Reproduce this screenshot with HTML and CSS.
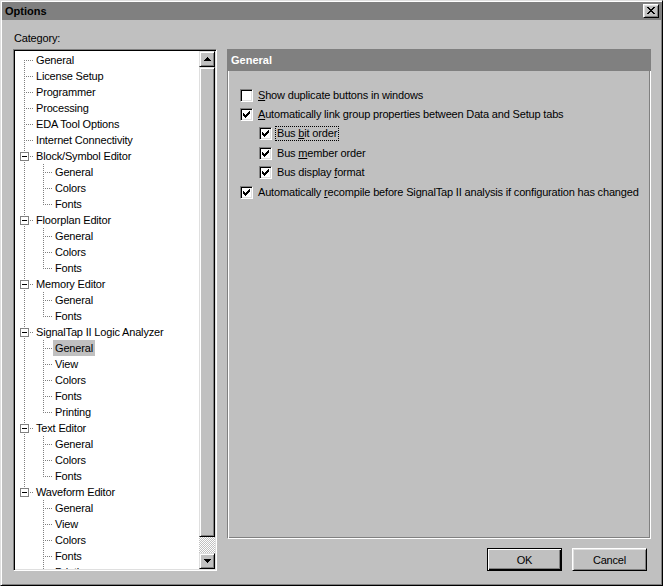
FILE: index.html
```html
<!DOCTYPE html>
<html>
<head>
<meta charset="utf-8">
<title>Options</title>
<link rel="stylesheet" href="styles.css">
</head>
<body>
<div class="window">
  <div class="titlebar">
    <span class="title">Options</span>
    <button class="close" type="button" aria-label="Close">
      <svg class="close-x" width="12" height="10" viewBox="0 0 12 10" shape-rendering="crispEdges">
        <g fill="#000">
          <rect x="2" y="1" width="2" height="1"/><rect x="8" y="1" width="2" height="1"/>
          <rect x="3" y="2" width="2" height="1"/><rect x="7" y="2" width="2" height="1"/>
          <rect x="4" y="3" width="4" height="1"/>
          <rect x="5" y="4" width="2" height="1"/>
          <rect x="4" y="5" width="4" height="1"/>
          <rect x="3" y="6" width="2" height="1"/><rect x="7" y="6" width="2" height="1"/>
          <rect x="2" y="7" width="2" height="1"/><rect x="8" y="7" width="2" height="1"/>
        </g>
      </svg>
    </button>
  </div>

  <div class="body">
    <div class="left">
      <div class="cat-label">Category:</div>
      <div class="tree">
        <div class="tree-list">
          <div class="row"><span class="cell first"></span><span class="lbl">General</span></div>
          <div class="row"><span class="cell tee"></span><span class="lbl">License Setup</span></div>
          <div class="row"><span class="cell tee"></span><span class="lbl">Programmer</span></div>
          <div class="row"><span class="cell tee"></span><span class="lbl">Processing</span></div>
          <div class="row"><span class="cell tee"></span><span class="lbl">EDA Tool Options</span></div>
          <div class="row"><span class="cell tee"></span><span class="lbl">Internet Connectivity</span></div>

          <div class="row"><span class="cell tee"><span class="toggle"><span class="minus"></span></span></span><span class="lbl">Block/Symbol Editor</span></div>
          <div class="row"><span class="cell pipe"></span><span class="cell tee"></span><span class="lbl">General</span></div>
          <div class="row"><span class="cell pipe"></span><span class="cell tee"></span><span class="lbl">Colors</span></div>
          <div class="row"><span class="cell pipe"></span><span class="cell end"></span><span class="lbl">Fonts</span></div>

          <div class="row"><span class="cell tee"><span class="toggle"><span class="minus"></span></span></span><span class="lbl">Floorplan Editor</span></div>
          <div class="row"><span class="cell pipe"></span><span class="cell tee"></span><span class="lbl">General</span></div>
          <div class="row"><span class="cell pipe"></span><span class="cell tee"></span><span class="lbl">Colors</span></div>
          <div class="row"><span class="cell pipe"></span><span class="cell end"></span><span class="lbl">Fonts</span></div>

          <div class="row"><span class="cell tee"><span class="toggle"><span class="minus"></span></span></span><span class="lbl">Memory Editor</span></div>
          <div class="row"><span class="cell pipe"></span><span class="cell tee"></span><span class="lbl">General</span></div>
          <div class="row"><span class="cell pipe"></span><span class="cell end"></span><span class="lbl">Fonts</span></div>

          <div class="row"><span class="cell tee"><span class="toggle"><span class="minus"></span></span></span><span class="lbl">SignalTap II Logic Analyzer</span></div>
          <div class="row"><span class="cell pipe"></span><span class="cell tee"></span><span class="lbl sel">General</span></div>
          <div class="row"><span class="cell pipe"></span><span class="cell tee"></span><span class="lbl">View</span></div>
          <div class="row"><span class="cell pipe"></span><span class="cell tee"></span><span class="lbl">Colors</span></div>
          <div class="row"><span class="cell pipe"></span><span class="cell tee"></span><span class="lbl">Fonts</span></div>
          <div class="row"><span class="cell pipe"></span><span class="cell end"></span><span class="lbl">Printing</span></div>

          <div class="row"><span class="cell tee"><span class="toggle"><span class="minus"></span></span></span><span class="lbl">Text Editor</span></div>
          <div class="row"><span class="cell pipe"></span><span class="cell tee"></span><span class="lbl">General</span></div>
          <div class="row"><span class="cell pipe"></span><span class="cell tee"></span><span class="lbl">Colors</span></div>
          <div class="row"><span class="cell pipe"></span><span class="cell end"></span><span class="lbl">Fonts</span></div>

          <div class="row"><span class="cell end"><span class="toggle"><span class="minus"></span></span></span><span class="lbl">Waveform Editor</span></div>
          <div class="row"><span class="cell"></span><span class="cell tee"></span><span class="lbl">General</span></div>
          <div class="row"><span class="cell"></span><span class="cell tee"></span><span class="lbl">View</span></div>
          <div class="row"><span class="cell"></span><span class="cell tee"></span><span class="lbl">Colors</span></div>
          <div class="row"><span class="cell"></span><span class="cell tee"></span><span class="lbl">Fonts</span></div>
          <div class="row"><span class="cell"></span><span class="cell end"></span><span class="lbl">Printing</span></div>
        </div>
        <div class="vscroll">
          <div class="sbtn">
            <svg width="12" height="12" viewBox="0 0 12 12" shape-rendering="crispEdges">
              <g fill="#000">
                <rect x="6" y="4" width="1" height="1"/>
                <rect x="5" y="5" width="3" height="1"/>
                <rect x="4" y="6" width="5" height="1"/>
                <rect x="3" y="7" width="7" height="1"/>
              </g>
            </svg>
          </div>
          <div class="thumb"></div>
          <div class="track"></div>
          <div class="sbtn">
            <svg width="12" height="12" viewBox="0 0 12 12" shape-rendering="crispEdges">
              <g fill="#000">
                <rect x="3" y="4" width="7" height="1"/>
                <rect x="4" y="5" width="5" height="1"/>
                <rect x="5" y="6" width="3" height="1"/>
                <rect x="6" y="7" width="1" height="1"/>
              </g>
            </svg>
          </div>
        </div>
      </div>
    </div>

    <div class="right">
      <div class="panel">
        <div class="panel-head">General</div>
        <div class="opts">
          <div class="opt">
            <span class="cb"></span>
            <span class="opt-lbl"><u>S</u>how duplicate buttons in windows</span>
          </div>
          <div class="opt">
            <span class="cb"><svg class="tick" width="9" height="9" viewBox="0 0 9 9" shape-rendering="crispEdges"><g fill="#000"><rect x="1" y="3" width="1" height="3"/><rect x="2" y="4" width="1" height="3"/><rect x="3" y="5" width="1" height="3"/><rect x="4" y="4" width="1" height="3"/><rect x="5" y="3" width="1" height="3"/><rect x="6" y="2" width="1" height="3"/><rect x="7" y="1" width="1" height="3"/></g></svg></span>
            <span class="opt-lbl"><u>A</u>utomatically link group properties between Data and Setup tabs</span>
          </div>
          <div class="opt sub">
            <span class="cb"><svg class="tick" width="9" height="9" viewBox="0 0 9 9" shape-rendering="crispEdges"><g fill="#000"><rect x="1" y="3" width="1" height="3"/><rect x="2" y="4" width="1" height="3"/><rect x="3" y="5" width="1" height="3"/><rect x="4" y="4" width="1" height="3"/><rect x="5" y="3" width="1" height="3"/><rect x="6" y="2" width="1" height="3"/><rect x="7" y="1" width="1" height="3"/></g></svg></span>
            <span class="opt-lbl focus">Bus <u>b</u>it order</span>
          </div>
          <div class="opt sub gap">
            <span class="cb"><svg class="tick" width="9" height="9" viewBox="0 0 9 9" shape-rendering="crispEdges"><g fill="#000"><rect x="1" y="3" width="1" height="3"/><rect x="2" y="4" width="1" height="3"/><rect x="3" y="5" width="1" height="3"/><rect x="4" y="4" width="1" height="3"/><rect x="5" y="3" width="1" height="3"/><rect x="6" y="2" width="1" height="3"/><rect x="7" y="1" width="1" height="3"/></g></svg></span>
            <span class="opt-lbl">Bus <u>m</u>ember order</span>
          </div>
          <div class="opt sub">
            <span class="cb"><svg class="tick" width="9" height="9" viewBox="0 0 9 9" shape-rendering="crispEdges"><g fill="#000"><rect x="1" y="3" width="1" height="3"/><rect x="2" y="4" width="1" height="3"/><rect x="3" y="5" width="1" height="3"/><rect x="4" y="4" width="1" height="3"/><rect x="5" y="3" width="1" height="3"/><rect x="6" y="2" width="1" height="3"/><rect x="7" y="1" width="1" height="3"/></g></svg></span>
            <span class="opt-lbl">Bus display <u>f</u>ormat</span>
          </div>
          <div class="opt gap">
            <span class="cb"><svg class="tick" width="9" height="9" viewBox="0 0 9 9" shape-rendering="crispEdges"><g fill="#000"><rect x="1" y="3" width="1" height="3"/><rect x="2" y="4" width="1" height="3"/><rect x="3" y="5" width="1" height="3"/><rect x="4" y="4" width="1" height="3"/><rect x="5" y="3" width="1" height="3"/><rect x="6" y="2" width="1" height="3"/><rect x="7" y="1" width="1" height="3"/></g></svg></span>
            <span class="opt-lbl">Automatically <u>r</u>ecompile before SignalTap II analysis if configuration has changed</span>
          </div>
        </div>
      </div>
      <div class="buttons">
        <button class="btn default" type="button">OK</button>
        <button class="btn" type="button">Cancel</button>
      </div>
    </div>
  </div>
</div>
</body>
</html>
```

FILE: styles.css
```css
html, body {
  margin: 0;
  padding: 0;
  background: #c0c0c0;
}

body {
  font-family: "Liberation Sans", Arial, sans-serif;
  font-size: 11px;
  letter-spacing: -0.17px;
  color: #000;
}

.window {
  box-sizing: border-box;
  width: 663px;
  height: 586px;
  background: #c0c0c0;
  border: 1px solid;
  border-color: #dfdfdf #000 #000 #dfdfdf;
  box-shadow: inset 1px 1px 0 #fff, inset -1px -1px 0 #808080;
  padding: 1px;
}

/* ---------- title bar ---------- */
.titlebar {
  height: 18px;
  background: #808080;
  display: flex;
  align-items: center;
  padding-left: 3px;
}

.title {
  font-weight: bold;
  color: #000;
  letter-spacing: 0;
  line-height: 18px;
}

.close {
  margin-left: auto;
  margin-right: 2px;
  box-sizing: border-box;
  width: 16px;
  height: 14px;
  padding: 1px;
  border: 1px solid;
  border-color: #fff #000 #000 #fff;
  box-shadow: inset 1px 1px 0 #dfdfdf, inset -1px -1px 0 #808080;
  background: #c0c0c0;
  display: flex;
}

.close-x {
  display: block;
}

/* ---------- layout ---------- */
.body {
  display: flex;
  padding-left: 11px;
  gap: 10px;
}

.left {
  width: 204px;
  flex: none;
}

.cat-label {
  box-sizing: border-box;
  height: 29px;
  padding: 12px 0 0 1px;
  line-height: 13px;
}

/* ---------- tree ---------- */
.tree {
  box-sizing: border-box;
  width: 204px;
  height: 522px;
  border: 1px solid;
  border-color: #808080 #fff #fff #808080;
  box-shadow: inset 1px 1px 0 #000, inset -1px -1px 0 #dfdfdf;
  padding: 1px;
  background: #fff;
  display: flex;
}

.tree-list {
  flex: 1;
  overflow: hidden;
  padding-top: 1px;
}

.row {
  display: flex;
  height: 16px;
  white-space: nowrap;
}

.cell {
  flex: none;
  width: 19px;
  height: 16px;
  background-repeat: no-repeat;
}

.pipe {
  background-image: repeating-linear-gradient(to bottom, #808080 0 1px, transparent 1px 2px);
  background-size: 1px 16px;
  background-position: 9px 0;
}

.tee {
  background-image:
    repeating-linear-gradient(to bottom, #808080 0 1px, transparent 1px 2px),
    repeating-linear-gradient(to right, #808080 0 1px, transparent 1px 2px);
  background-size: 1px 16px, 8px 1px;
  background-position: 9px 0, 11px 8px;
}

.end {
  background-image:
    repeating-linear-gradient(to bottom, #808080 0 1px, transparent 1px 2px),
    repeating-linear-gradient(to right, #808080 0 1px, transparent 1px 2px);
  background-size: 1px 9px, 8px 1px;
  background-position: 9px 0, 11px 8px;
}

.first {
  background-image:
    repeating-linear-gradient(to bottom, #808080 0 1px, transparent 1px 2px),
    repeating-linear-gradient(to right, #808080 0 1px, transparent 1px 2px);
  background-size: 1px 8px, 8px 1px;
  background-position: 9px 8px, 11px 8px;
}

.cell:has(.toggle) {
  display: flex;
  align-items: flex-start;
}

.toggle {
  box-sizing: border-box;
  width: 9px;
  height: 9px;
  margin: 4px 0 0 5px;
  border: 1px solid #808080;
  background: #fff;
  display: flex;
  align-items: center;
  justify-content: center;
}

.minus {
  width: 5px;
  height: 1px;
  background: #000;
}

.lbl {
  padding: 0 2px;
  line-height: 16px;
  height: 16px;
}

.lbl.sel {
  background: #c0c0c0;
}

/* ---------- scrollbar ---------- */
.vscroll {
  flex: none;
  width: 16px;
  display: flex;
  flex-direction: column;
}

.sbtn,
.thumb {
  box-sizing: border-box;
  border: 1px solid;
  border-color: #dfdfdf #000 #000 #dfdfdf;
  box-shadow: inset 1px 1px 0 #fff, inset -1px -1px 0 #808080;
  padding: 1px;
  background: #c0c0c0;
}

.sbtn {
  height: 16px;
  flex: none;
}

.sbtn svg {
  display: block;
}

.thumb {
  height: 470px;
  flex: none;
}

.track {
  flex: 1;
  background-color: #fff;
  background-image: conic-gradient(#c0c0c0 0 25%, #fff 0 50%, #c0c0c0 0 75%, #fff 0);
  background-size: 2px 2px;
}

/* ---------- right panel ---------- */
.right {
  width: 424px;
  flex: none;
  padding-top: 29px;
}

.panel {
  box-sizing: border-box;
  height: 490px;
  border: 1px solid;
  border-color: #808080 #fff #fff #808080;
  box-shadow: inset 1px 1px 0 #fff, inset -1px -1px 0 #808080;
}

.panel-head {
  height: 22px;
  margin: -1px -1px 0 -1px;
  background: #808080;
  color: #fff;
  font-weight: bold;
  letter-spacing: 0;
  line-height: 22px;
  padding-left: 4px;
}

.opts {
  padding-top: 15px;
}

.opt {
  display: flex;
  align-items: center;
  height: 19px;
  padding-left: 12px;
  white-space: nowrap;
}

.opt.sub {
  padding-left: 31px;
}

.opt.gap {
  margin-top: 1px;
}

.cb {
  flex: none;
  box-sizing: border-box;
  width: 13px;
  height: 13px;
  border: 1px solid;
  border-color: #808080 #fff #fff #808080;
  box-shadow: inset 1px 1px 0 #000, inset -1px -1px 0 #dfdfdf;
  padding: 1px;
  background: #fff;
}

.tick {
  display: block;
}

.opt-lbl {
  margin-left: 3px;
  padding: 0 1px;
  border: 1px dotted transparent;
  line-height: 13px;
}

.opt-lbl.focus {
  border-color: #000;
}

/* ---------- buttons ---------- */
.buttons {
  display: flex;
  justify-content: flex-end;
  gap: 10px;
  margin-top: 9px;
  padding-right: 4px;
}

.btn {
  box-sizing: border-box;
  width: 75px;
  height: 23px;
  padding: 0;
  font: inherit;
  letter-spacing: inherit;
  color: #000;
  background: #c0c0c0;
  border: 1px solid;
  border-color: #fff #000 #000 #fff;
  box-shadow: inset 1px 1px 0 #dfdfdf, inset -1px -1px 0 #808080;
}

.btn.default {
  border-color: #000;
  box-shadow: inset 1px 1px 0 #fff, inset -1px -1px 0 #000, inset -2px -2px 0 #808080;
}
```
